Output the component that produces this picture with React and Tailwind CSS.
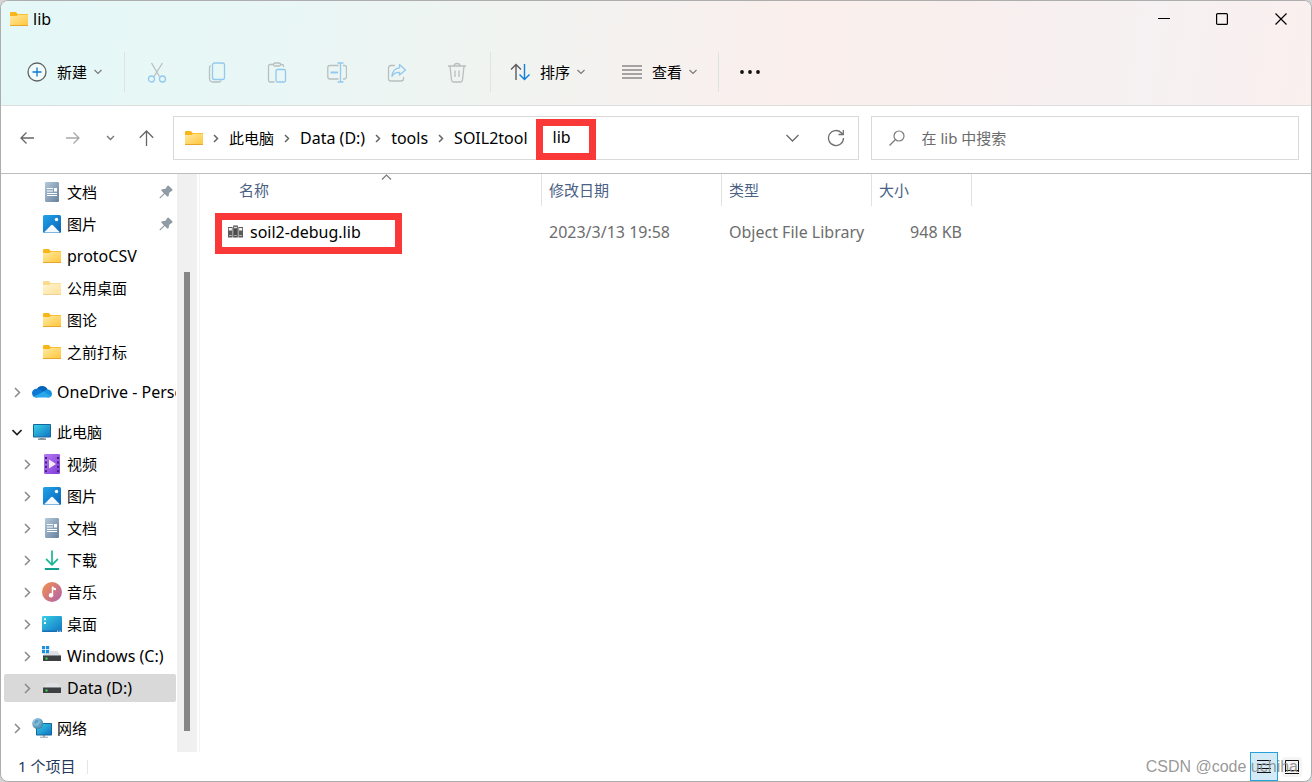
import React from "react";

function Folder({ faded }) {
  return (
    <svg width="18" height="14" viewBox="0 0 18 14" className={faded ? "shrink-0 opacity-50" : "shrink-0"} aria-hidden="true">
      <defs>
        <linearGradient id="folderBody" x1="0" y1="0" x2="1" y2="1">
          <stop offset="0" stopColor="#ffe9a4" />
          <stop offset="1" stopColor="#ffc638" />
        </linearGradient>
      </defs>
      <path d="M0 1Q0 0 1 0H6L7.5 2H17.5Q18 2 18 2.6V6H0Z" fill="#f9b61a" />
      <path d="M0 4H6.5L8 2.8H18V13.4Q18 14 17.4 14H.6Q0 14 0 13.4Z" fill="url(#folderBody)" />
      <path d="M0 13H18V13.4Q18 14 17.4 14H.6Q0 14 0 13.4Z" fill="#e9a52a" />
    </svg>
  );
}

function Doc() {
  return (
    <svg width="20" height="20" viewBox="0 0 20 20" className="shrink-0" aria-hidden="true">
      <defs>
        <linearGradient id="docBody" x1="0" y1="0" x2="1" y2="1">
          <stop offset="0" stopColor="#b4c9da" />
          <stop offset="1" stopColor="#66809d" />
        </linearGradient>
      </defs>
      <rect x="3" y="0" width="14" height="20" rx="1.2" fill="url(#docBody)" />
      <path d="M5 6.5H11M5 9H11M5 11.5H15M5 13.5H15" stroke="#fff" strokeWidth="1.1" />
      <rect x="12" y="6" width="3" height="3.5" fill="#fff" />
    </svg>
  );
}

function Picture() {
  return (
    <svg width="20" height="20" viewBox="0 0 20 20" className="shrink-0" aria-hidden="true">
      <defs>
        <linearGradient id="picBody" x1="0" y1="0" x2="1" y2="1">
          <stop offset="0" stopColor="#1fa4ea" />
          <stop offset="1" stopColor="#0a63b9" />
        </linearGradient>
      </defs>
      <rect x="1" y="1" width="18" height="18" rx="1.5" fill="url(#picBody)" />
      <path d="M2.2 18.2L9 11.2Q10 10.2 11 11.2L17.8 18.2Q17.4 18.6 17 18.6H3Q2.6 18.6 2.2 18.2Z" fill="#f4f9fe" />
      <circle cx="14.5" cy="5.5" r="1.7" fill="#fff" />
    </svg>
  );
}

function Cloud() {
  return (
    <svg width="20" height="20" viewBox="0 0 20 20" className="shrink-0" aria-hidden="true">
      <path d="M4.5 8A6 6 0 0 1 15.7 7.600L10 13Z" fill="#0364b8" />
      <path d="M4.6 15.500A4.6 4.600 0 0 1 0 11.300C0 8.500 2.400 6.300 5.600 6.700Q7 6.900 8.500 7.900L14 11.500L5 15.500Z" fill="#0f78d4" />
      <path d="M11 9.500L15.200 7.600A4.300 4.300 0 0 1 20 11.700A4 4 0 0 1 16 15.500L10 13.500Z" fill="#1490df" />
      <path d="M1.500 14.500L12 9.600L19 14.300Q17.900 15.500 16 15.500H4.500Q2.600 15.500 1.500 14.500Z" fill="#28a8ea" />
    </svg>
  );
}

function Monitor() {
  return (
    <svg width="20" height="20" viewBox="0 0 20 20" className="shrink-0" aria-hidden="true">
      <defs>
        <linearGradient id="screen" x1="0" y1="0" x2="1" y2="1">
          <stop offset="0" stopColor="#37d0e6" />
          <stop offset="1" stopColor="#1274c4" />
        </linearGradient>
      </defs>
      <rect x="1" y="2" width="18" height="13.5" rx="0.8" fill="#14679c" />
      <rect x="2" y="3" width="16" height="11.5" fill="url(#screen)" />
      <path d="M8 15.5H12V17H8Z" fill="#a9b2b8" />
      <path d="M6 17.2H14" stroke="#67737b" strokeWidth="1.2" />
    </svg>
  );
}

function Video() {
  return (
    <svg width="20" height="20" viewBox="0 0 20 20" className="shrink-0" aria-hidden="true">
      <defs>
        <linearGradient id="film" x1="0" y1="0" x2="1" y2="1">
          <stop offset="0" stopColor="#b77af0" />
          <stop offset="1" stopColor="#7f3bd8" />
        </linearGradient>
      </defs>
      <rect x="2" y="0" width="16" height="20" rx="1.2" fill="url(#film)" />
      <path d="M4 3V18M16 3V18" stroke="#3e1f78" strokeWidth="2" strokeDasharray="2 2.4" />
      <path d="M7 5.5V14.5L14 10Z" fill="#f3ecfb" />
    </svg>
  );
}

function Download() {
  return (
    <svg width="20" height="20" viewBox="0 0 20 20" className="shrink-0" fill="none" strokeLinecap="round" strokeLinejoin="round" aria-hidden="true">
      <path d="M10 1V14.5M4.5 9.3L10 14.8L15.500 9.300" stroke="#17b795" strokeWidth="1.7" />
      <path d="M3.500 19H16.500" stroke="#0f9f8c" strokeWidth="1.8" />
    </svg>
  );
}

function Music() {
  return (
    <svg width="20" height="20" viewBox="0 0 20 20" className="shrink-0" aria-hidden="true">
      <defs>
        <linearGradient id="disc" x1="0" y1="0.1" x2="1" y2="0.9">
          <stop offset="0" stopColor="#f2904c" />
          <stop offset="1" stopColor="#b161ac" />
        </linearGradient>
      </defs>
      <circle cx="10" cy="10" r="10" fill="url(#disc)" />
      <circle cx="9" cy="13.200" r="2.200" fill="#fff" />
      <path d="M9.800 4.500H11.200Q11.500 6 14 6.300V8.300Q12.300 8.300 11.200 7.500V13.200H9.800Z" fill="#fff" />
    </svg>
  );
}

function DesktopIcon() {
  return (
    <svg width="20" height="20" viewBox="0 0 20 20" className="shrink-0" aria-hidden="true">
      <rect x="0" y="2" width="20" height="16" rx="1.200" fill="url(#screen)" />
      <path d="M2 4.200H4V6.200H2ZM2 8H4V10H2Z" fill="#e9fbff" />
      <path d="M0 16.500H20V17Q20 18 19 18H1Q0 18 0 17Z" fill="#1a6eb3" />
      <path d="M15 17.200H16.200M17.500 17.200H18.700" stroke="#fff" strokeWidth="1" />
    </svg>
  );
}

function Drive({ windows }) {
  return (
    <svg width="20" height="20" viewBox="0 0 20 20" className="shrink-0" aria-hidden="true">
      <path d="M4.500 5H15.500L19 9.500H1Z" fill="#dfe1e4" />
      <rect x="1" y="9" width="18" height="6" rx="0.600" fill="#3d4043" />
      <path d="M1 9.500H19" stroke="#8a8d90" strokeWidth="1" />
      <rect x="3.500" y="11.500" width="2" height="2" fill="#3be14b" />
      {windows && (
        <g>
          <rect x="0" y="-1" width="8" height="8" fill="#fff" />
          <path d="M0 0H3.200V3.200H0ZM4 0H7.200V3.200H4ZM0 4H3.200V7.200H0ZM4 4H7.200V7.200H4Z" fill="#1c8fe3" />
        </g>
      )}
    </svg>
  );
}

function Network() {
  return (
    <svg width="20" height="20" viewBox="0 0 20 20" className="shrink-0" aria-hidden="true">
      <defs>
        <radialGradient id="globe" cx="0.35" cy="0.3" r="0.8">
          <stop offset="0" stopColor="#b8dcee" />
          <stop offset="1" stopColor="#2f7ba6" />
        </radialGradient>
      </defs>
      <path d="M11 17H13V19H11Z" fill="#a9b2b8" />
      <path d="M8 19.300H16" stroke="#9aa5ab" strokeWidth="1.100" />
      <rect x="4" y="5" width="16" height="12.500" rx="0.700" fill="#14679c" />
      <rect x="5" y="6" width="14" height="10.500" fill="url(#screen)" />
      <circle cx="5.700" cy="5.500" r="5.500" fill="url(#globe)" />
      <path d="M3 2.500Q5 1 7 2L6 4.500L3.500 6L2 5ZM7 6L9.500 5.500L9 8.500L7 9.500Z" fill="#5c9fbf" />
    </svg>
  );
}

function Pin() {
  return (
    <svg width="14" height="14" viewBox="0 0 14 14" className="shrink-0" aria-hidden="true">
      <path d="M8.300 .9Q8.900 .1 9.700 .8L13.300 4.300Q13.900 5.200 13.100 5.800L10.300 7.700L9.600 10.900L8.400 11.700L5.700 9L1.400 13.300L.5 13V12.400L4.900 8.200L2.200 5.500L3 4.300L6.500 3.700Z" fill="#8f9ba5" />
    </svg>
  );
}

function Chevron({ className, d = "M2 1L6.500 5.500L2 10", w = 8, h = 11, stroke = "#8a8a8a", width = 1.500 }) {
  return (
    <svg width={w} height={h} viewBox={`0 0 ${w} ${h}`} fill="none" className={className} aria-hidden="true">
      <path d={d} stroke={stroke} strokeWidth={width} />
    </svg>
  );
}

function DownCaret() {
  return <Chevron w={8} h={6} d="M0.500 1L4 4.500L7.500 1" stroke="#777" width={1.100} />;
}

const GREY = "#b9bfbf";
const BLUE = "#92c9ee";

const TOOL_ICONS = [
  ["剪切", <><path d="M4.500 1L12.500 14.500M15.500 1L7 14.500" stroke={GREY} /><circle cx="4.500" cy="17" r="3" stroke={BLUE} /><circle cx="15.500" cy="17" r="3" stroke={BLUE} /></>],
  ["复制", <><path d="M4 3.500Q2.500 4 2.500 5.500V16Q2.500 20 6 20H12Q13.500 20 14 18.500" stroke={GREY} /><rect x="5.500" y="1" width="12" height="16.500" rx="2" stroke={BLUE} /></>],
  ["粘贴", <><path d="M7 2.500H3Q1.500 2.500 1.500 4V18Q1.500 20 3 20H7.500M13 2.500H15Q16.500 2.500 16.500 4V5" stroke={GREY} /><rect x="6.500" y="1" width="7" height="3" rx="1.500" stroke={GREY} /><rect x="9" y="7.500" width="9.500" height="12.500" rx="1.500" stroke={BLUE} /></>],
  ["重命名", <><path d="M11.500 3.500H3Q.8 3.500 .8 5.500V14.500Q.8 17 3 17H11.500M16 3.500H17.500Q19.500 3.500 19.500 5.500V14.500Q19.500 17 17.500 17H16" stroke={GREY} /><path d="M13.500 1V20M10.500 1H16.500M10.500 20H16.500" stroke={BLUE} /><path d="M3.500 10.500H11" stroke={BLUE} strokeWidth="2" /></>],
  ["共享", <><path d="M8 3.500H4Q1.500 3.500 1.500 6V17Q1.500 19 4 19H14Q16.500 19 16.500 17V15" stroke={GREY} /><path d="M12.500 2.500L18.500 8L12.500 13V10.300Q7.500 10 5 14.300Q5.500 6.500 12.500 5.800Z" stroke={BLUE} strokeLinejoin="round" /></>],
  ["删除", <><path d="M1 4H19M7 4Q7 1.500 10 1.500Q13 1.500 13 4M3 4L4.500 18Q4.700 20 6.500 20H13.500Q15.300 20 15.500 18L17 4M8 8.500V15M12 8.500V15" stroke={GREY} /></>],
];

function ToolButton({ label, children }) {
  return (
    <button type="button" aria-label={label} disabled className="flex h-10 w-[60px] items-center justify-center">
      <svg width="20" height="21" viewBox="0 0 20 21" fill="none" strokeWidth="1.3" aria-hidden="true">{children}</svg>
    </button>
  );
}

function Separator() {
  return <span className="h-10 w-px bg-[#dfe3e1]" />;
}

const PINNED = [
  { label: "文档", icon: <Doc />, pin: true },
  { label: "图片", icon: <Picture />, pin: true },
  { label: "protoCSV", latin: true, icon: <Folder /> },
  { label: "公用桌面", icon: <Folder faded /> },
  { label: "图论", icon: <Folder /> },
  { label: "之前打标", icon: <Folder /> },
];

const PC_CHILDREN = [
  { label: "视频", icon: <Video /> },
  { label: "图片", icon: <Picture /> },
  { label: "文档", icon: <Doc /> },
  { label: "下载", icon: <Download /> },
  { label: "音乐", icon: <Music /> },
  { label: "桌面", icon: <DesktopIcon /> },
  { label: "Windows (C:)", latin: true, icon: <Drive windows /> },
  { label: "Data (D:)", latin: true, icon: <Drive />, selected: true },
];

function NavItem({ label, latin, icon, pin, selected, root, open, arrow }) {
  return (
    <li className="flex h-8 items-center pl-[3px]">
      <a
        href="#"
        className={`flex h-7 w-full items-center overflow-hidden rounded-[2px] whitespace-nowrap ${root ? "pl-2" : "pl-[18px]"} ${selected ? "bg-[#d9d9d9]" : ""}`}
      >
        <span className="flex w-[10px] shrink-0 items-center justify-center">
          {arrow && (open
            ? <Chevron w={10} h={7} d="M0.500 1L5 5.500L9.500 1" stroke="#222" width={1.600} />
            : <Chevron />)}
        </span>
        <span className="ml-[10px] flex w-5 shrink-0 justify-center">{icon}</span>
        <span className={`ml-[5px] ${latin ? "text-base/5" : ""}`}>{label}</span>
        {pin && <span className="mr-[3px] ml-auto"><Pin /></span>}
      </a>
    </li>
  );
}

function Sidebar() {
  return (
    <div className="flex w-[199px] shrink-0 border-r border-[#f3f3f3]">
      <nav aria-label="导航窗格" className="w-[175px] shrink-0 overflow-hidden pt-[2px]">
        <ul>{PINNED.map((i) => <NavItem key={i.label} {...i} />)}</ul>
        <ul className="mt-2"><NavItem root arrow label="OneDrive - Personal" icon={<Cloud />} latin /></ul>
        <ul className="mt-2">
          <NavItem root arrow open label="此电脑" icon={<Monitor />} />
          {PC_CHILDREN.map((i) => <NavItem key={i.label} arrow {...i} />)}
        </ul>
        <ul className="mt-2"><NavItem root arrow label="网络" icon={<Network />} /></ul>
      </nav>
      <div className="ml-px flex w-5 flex-col items-center bg-[#f0f0f0]">
        <span className="flex-[98_1_0%]" />
        <span className="w-[6px] flex-[459_1_0%] bg-[#868686]" />
        <span className="flex-[21_1_0%]" />
      </div>
    </div>
  );
}

function LibFile() {
  return (
    <svg width="15" height="14" viewBox="0 0 15 14" className="shrink-0" aria-hidden="true">
      <path d="M0 2H4.600V12.500H0ZM10.400 2H15V12.500H10.400Z" fill="#5a5a5a" />
      <path d="M5.200 1H9.800V12.500H5.200Z" fill="#4a4a4a" />
      <path d="M.8 4.200H3.900M11.100 4.200H14.200" stroke="#f2f2f2" strokeWidth="2.400" />
      <path d="M1 10.500H3.800M11.200 10.500H14M6.200 10.500H8.800" stroke="#b5b5b5" strokeWidth="1" />
      <path d="M6 2.500H9" stroke="#dcdcdc" strokeWidth="1.500" />
      <path d="M5.200 .6H9.800" stroke="#9a9a9a" strokeWidth="1" />
    </svg>
  );
}

function FileTable() {
  const th = "h-8 border-r border-[#e2e2e2] pl-[7px] text-left align-middle font-normal";
  return (
    <table className="w-[772px] table-fixed border-separate border-spacing-0">
      <colgroup>
        <col className="w-[342px]" />
        <col className="w-[180px]" />
        <col className="w-[150px]" />
        <col className="w-[100px]" />
      </colgroup>
      <thead className="text-[#4a6184]">
        <tr>
          <th className="relative h-8 border-r border-[#e2e2e2] pl-[39px] text-left align-middle font-normal">
            名称
            <Chevron className="absolute top-0 left-[181px]" w={11} h={7} d="M1 5.500L5.500 1L10 5.500" stroke="#777" width={1.100} />
          </th>
          <th className={th}>修改日期</th>
          <th className={th}>类型</th>
          <th className={th}>大小</th>
        </tr>
      </thead>
      <tbody className="text-base/5 text-[#6d6d6d]">
        <tr>
          <td className="pt-[7px] pl-[15px]">
            <a href="#" className="flex h-[41px] w-[187px] items-center gap-[7px] border-[7px] border-[#fb3838] pb-1 pl-[6px] whitespace-nowrap text-black">
              <LibFile />
              soil2-debug.lib
            </a>
          </td>
          <td className="pt-1 pl-[7px]">2023/3/13 19:58</td>
          <td className="pt-1 pl-[7px] whitespace-nowrap">Object File Library</td>
          <td className="pt-1 pr-[10px] text-right">948 KB</td>
        </tr>
      </tbody>
    </table>
  );
}

function CrumbArrow() {
  return (
    <span className="flex w-[26px] shrink-0 justify-center">
      <Chevron w={6} h={9} d="M1 1L4.500 4.500L1 8" stroke="#666" width={1.500} />
    </span>
  );
}

function AddressRow() {
  return (
    <div className="flex items-center border-b border-[#bdbdbd] pt-[10px] pr-3 pb-[13px] pl-[3px]">
      <button type="button" aria-label="后退" className="flex h-11 w-[46px] items-center justify-center">
        <svg width="14" height="12" viewBox="0 0 14 12" fill="none" stroke="#666" strokeWidth="1.300"><path d="M14 6H1M6.500 .5L1 6L6.500 11.500" /></svg>
      </button>
      <button type="button" aria-label="前进" className="flex h-11 w-[46px] items-center justify-center">
        <svg width="14" height="12" viewBox="0 0 14 12" fill="none" stroke="#a8a8a8" strokeWidth="1.300"><path d="M0 6H13M7.500 .5L13 6L7.500 11.500" /></svg>
      </button>
      <button type="button" aria-label="最近的位置" className="flex h-11 w-7 items-center justify-center">
        <Chevron w={9} h={6} d="M1 1L4.500 4.500L8 1" stroke="#777" width={1.400} />
      </button>
      <button type="button" aria-label="向上" className="mr-[3px] flex h-11 w-[46px] items-center justify-center">
        <svg width="16" height="16" viewBox="0 0 16 16" fill="none" stroke="#666" strokeWidth="1.300"><path d="M7.500 16V1M.8 7.700L7.500 1L14.200 7.700" /></svg>
      </button>
      <div className="flex h-11 min-w-0 flex-[23_1_0%] items-center border border-[#d9d9d9] pl-[11px] whitespace-nowrap">
        <Folder />
        <CrumbArrow />
        <a href="#">此电脑</a>
        <CrumbArrow />
        <a href="#" className="text-base/5">Data (D:)</a>
        <CrumbArrow />
        <a href="#" className="text-base/5">tools</a>
        <CrumbArrow />
        <a href="#" className="text-base/5">SOIL2tool</a>
        <a href="#" className="mt-[2px] ml-2 flex h-[41px] w-[60px] items-center border-[7px] border-[#fb3838] pb-1 pl-[10px] text-base/5">lib</a>
        <button type="button" aria-label="以前的位置" className="ml-auto flex h-10 w-[43px] items-center justify-center">
          <Chevron w={13} h={8} d="M0.500 1L6.500 7L12.500 1" stroke="#6b6b6b" width={1.300} />
        </button>
        <button type="button" aria-label="刷新" className="flex h-10 w-11 items-center justify-center">
          <svg width="18" height="18" viewBox="0 0 18 18" fill="none" stroke="#707070" strokeWidth="1.300"><path d="M16.500 9A7.500 7.500 0 1 1 14.300 3.700L16 5.500M16.300 1V5.500H11.500" /></svg>
        </button>
      </div>
      <label className="ml-3 flex h-11 min-w-0 flex-[14_1_0%] items-center border border-[#d9d9d9] pl-[17px]">
        <svg width="16" height="16" viewBox="0 0 16 16" fill="none" stroke="#7a7a7a" strokeWidth="1.200" className="shrink-0"><circle cx="10" cy="6" r="5" /><path d="M6.500 9.500L0.500 15.500" /></svg>
        <input type="search" aria-label="搜索" placeholder="在 lib 中搜索" className="ml-[17px] w-full min-w-0 bg-transparent outline-none placeholder:text-[#6b6b6b]" />
      </label>
    </div>
  );
}

function Header() {
  return (
    <header className="border-b border-[#dcdedd] bg-[linear-gradient(100deg,#e4f8f7_0%,#e8f7f6_20%,#f2f3f0_42%,#faefed_60%,#f9efed_70%,#f6f1f2_87%,#faf0ee_100%)]">
      <div className="flex h-9 items-center pl-[9px]">
        <Folder />
        <h1 className="ml-[5px] text-base/5">lib</h1>
        <div className="ml-auto flex">
          <button type="button" aria-label="最小化" className="flex h-9 w-[58px] items-center justify-center">
            <svg width="12" height="12" viewBox="0 0 12 12"><path d="M0 5.500H12" stroke="#000" /></svg>
          </button>
          <button type="button" aria-label="最大化" className="flex h-9 w-[58px] items-center justify-center">
            <svg width="12" height="12" viewBox="0 0 12 12" fill="none"><rect x="0.600" y="0.600" width="10.800" height="10.800" rx="1" stroke="#000" strokeWidth="1.200" /></svg>
          </button>
          <button type="button" aria-label="关闭" className="flex h-9 w-[60px] items-center justify-center">
            <svg width="12" height="12" viewBox="0 0 12 12"><path d="M0.500 0.500L11.500 11.500M11.500 0.500L0.500 11.500" stroke="#000" strokeWidth="1.200" /></svg>
          </button>
        </div>
      </div>
      <div className="flex h-[68px] items-center pt-[2px]">
        <button type="button" className="flex h-10 w-[123px] items-center pl-[26px]">
          <svg width="20" height="20" viewBox="0 0 20 20" fill="none" strokeWidth="1.300"><circle cx="10" cy="10" r="9" stroke="#5e6464" fill="#f2fbfb" /><path d="M10 5.500V14.500M5.500 10H14.500" stroke="#0f78d0" /></svg>
          <span className="ml-[10px]">新建</span>
          <span className="ml-[7px]"><DownCaret /></span>
        </button>
        <Separator />
        <div className="mr-[3px] ml-[2px] flex">
          {TOOL_ICONS.map(([label, art]) => <ToolButton key={label} label={label}>{art}</ToolButton>)}
        </div>
        <Separator />
        <button type="button" className="flex h-10 w-[112px] items-center pl-[19px]">
          <svg width="20" height="18" viewBox="0 0 20 18" fill="none" strokeWidth="1.400"><path d="M6 17V1.500M1 6.500L6 1.500L11 6.500" stroke="#5b5b5b" /><path d="M14.500 1V16M9.500 11.500L14.500 16.500L19.500 11.500" stroke="#0f7fdc" /></svg>
          <span className="ml-[10px]">排序</span>
          <span className="ml-[7px]"><DownCaret /></span>
        </button>
        <button type="button" className="flex h-10 w-[115px] items-center pl-[19px]">
          <svg width="20" height="14" viewBox="0 0 20 14" stroke="#555" strokeWidth="1.100"><path d="M0 1H20M0 5H20M0 9H20M0 13H20" /></svg>
          <span className="ml-[10px]">查看</span>
          <span className="ml-[7px]"><DownCaret /></span>
        </button>
        <Separator />
        <button type="button" aria-label="查看更多" className="flex h-10 w-[62px] items-center justify-center">
          <svg width="22" height="4" viewBox="0 0 22 4" fill="#111"><circle cx="3" cy="2" r="1.900" /><circle cx="11" cy="2" r="1.900" /><circle cx="19" cy="2" r="1.900" /></svg>
        </button>
      </div>
    </header>
  );
}

function StatusBar() {
  return (
    <footer className="flex h-[29px] shrink-0 items-center pl-[17px] text-[#23395b]">
      <span className="pb-[2px]">1 个项目</span>
      <span className="ml-3 h-[14px] w-px bg-[#e6e6e6]" />
      <div className="relative mr-[5px] ml-auto flex items-center">
        <button type="button" aria-label="详细信息" className="flex h-[29px] w-7 items-center justify-center border border-[#26a0da] bg-[#d4ebf7]">
          <svg width="14" height="14" viewBox="0 0 14 14" stroke="#111" strokeWidth="1"><path d="M0 .5H14M0 4.500H14M0 8.500H14M0 12.500H14" /></svg>
        </button>
        <button type="button" aria-label="大缩略图" className="flex h-[29px] w-7 items-center justify-center">
          <svg width="20" height="20" viewBox="0 0 20 20" fill="none"><rect width="20" height="20" rx="2" fill="#f5f5f5" /><path d="M3.500 15V3.500H16.500V15M3 13.500H17M3 16.500H17" stroke="#111" /></svg>
        </button>
        <span className="pointer-events-none absolute right-2 bottom-[2px] font-['Liberation_Sans',sans-serif] text-base whitespace-nowrap text-[#8c8c8c]/90">CSDN @code uchiha</span>
      </div>
    </footer>
  );
}

export default function App() {
  return (
    <div className="h-screen bg-[#d5d2d4]">
      <div className="flex h-full flex-col overflow-hidden rounded-lg border border-[#adadad] bg-white font-['Noto_Sans','Noto_Sans_CJK_SC',sans-serif] text-[15px] leading-5 text-black">
        <Header />
        <AddressRow />
        <div className="flex min-h-0 flex-1">
          <Sidebar />
          <main className="min-w-0 flex-1 overflow-hidden"><FileTable /></main>
        </div>
        <StatusBar />
      </div>
    </div>
  );
}
